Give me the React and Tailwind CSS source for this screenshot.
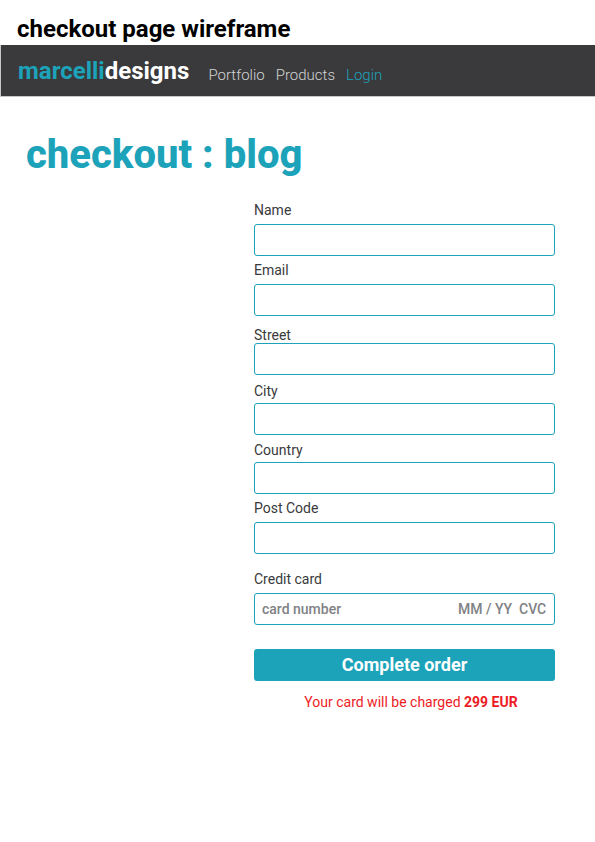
const fields = [
  { id: 'name', label: 'Name', type: 'text', spacing: 'gap-1.5' },
  { id: 'email', label: 'Email', type: 'email', spacing: 'mt-1.5 gap-1.5' },
  { id: 'street', label: 'Street', type: 'text', spacing: 'mt-[11px]' },
  { id: 'city', label: 'City', type: 'text', spacing: 'mt-2 gap-1' },
  { id: 'country', label: 'Country', type: 'text', spacing: 'mt-[7px] gap-1' },
  { id: 'postcode', label: 'Post Code', type: 'text', spacing: 'mt-1.5 gap-1.5' },
];

const box = 'h-8 w-full rounded-[3px] border border-[#1ca3ba] bg-white';
const cardInput =
  'min-w-0 bg-transparent font-medium text-[#808285] outline-none placeholder:text-[#808285] placeholder:opacity-100';

function Field({ id, label, type, spacing }) {
  return (
    <div className={`flex flex-col ${spacing}`}>
      <label htmlFor={id} className="leading-4">
        {label}
      </label>
      <input id={id} name={id} type={type} className={`${box} px-2`} />
    </div>
  );
}

export default function App() {
  return (
    <div className="min-h-screen bg-white font-['Roboto',sans-serif] text-sm text-[#3a3a3c]">
      <p className="px-[17px] pt-[17px] pb-1 text-2xl leading-6 font-bold text-black">
        checkout page wireframe
      </p>

      <header className="flex h-[52px] items-start border-b border-l border-[#c7c8ca] bg-[#3a3a3c] px-[17px] pt-3">
        <a href="#home" className="text-2xl leading-7 font-bold text-white">
          <span className="text-[#1ca3ba]">marcelli</span>designs
        </a>
        <nav className="ml-[19px] flex gap-[11px] text-[15px] leading-9 font-light text-[#d1d3d4]">
          <a href="#portfolio">Portfolio</a>
          <a href="#products">Products</a>
          <a href="#login" className="text-[#1ca3ba]">
            Login
          </a>
        </nav>
      </header>

      <main className="pr-10 pl-[26px]">
        <h1 className="pt-8 text-[40px] leading-[52px] font-extrabold text-[#1ca3ba]">checkout : blog</h1>

        <form className="mt-[21px] ml-auto flex w-[301px] flex-col" onSubmit={(e) => e.preventDefault()}>
          {fields.map((field) => (
            <Field key={field.id} {...field} />
          ))}

          <div className="mt-[17px] flex flex-col gap-1.5">
            <label htmlFor="card" className="leading-4">
              Credit card
            </label>
            <div className={`${box} flex items-center px-[7px]`}>
              <input id="card" name="card" placeholder="card number" className={`${cardInput} flex-1`} />
              <input
                name="expiry"
                aria-label="Expiry date"
                placeholder="MM / YY"
                className={`${cardInput} w-[61px]`}
              />
              <input name="cvc" aria-label="Security code" placeholder="CVC" className={`${cardInput} w-7`} />
            </div>
          </div>

          <button
            type="submit"
            className="mt-6 h-8 rounded-[3px] bg-[#1ca3ba] text-lg leading-7 font-bold text-white"
          >
            Complete order
          </button>

          <p className="mt-[11px] pl-[13px] text-center leading-5 text-[#ed1c24]">
            Your card will be charged <strong className="font-bold">299 EUR</strong>
          </p>
        </form>
      </main>
    </div>
  );
}
